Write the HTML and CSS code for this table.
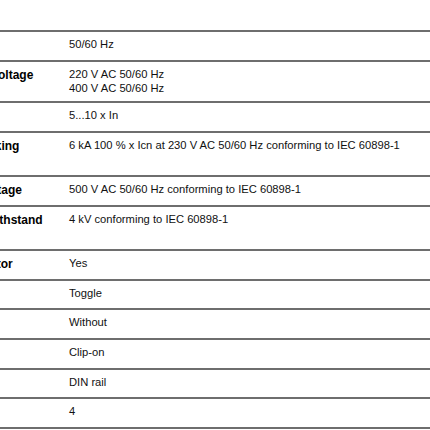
FILE: index.html
```html
<!DOCTYPE html>
<html lang="en">
<head>
<meta charset="utf-8">
<title>Technical characteristics</title>
<link rel="stylesheet" href="styles.css">
</head>
<body>
<div class="sheet">
  <table class="spec">
    <tbody>
      <tr><th>Network frequency</th><td>50/60 Hz</td></tr>
      <tr><th>[Ue] rated operational voltage</th><td>220 V AC 50/60 Hz<br>400 V AC 50/60 Hz</td></tr>
      <tr><th>Magnetic tripping limit</th><td>5...10 x In</td></tr>
      <tr><th>[Ics] rated service breaking capacity</th><td>6 kA 100 % x Icn at 230 V AC 50/60 Hz conforming to IEC 60898-1</td></tr>
      <tr><th>[Ui] rated insulation voltage</th><td>500 V AC 50/60 Hz conforming to IEC 60898-1</td></tr>
      <tr><th>[Uimp] rated impulse withstand voltage</th><td>4 kV conforming to IEC 60898-1</td></tr>
      <tr><th>Contact position indicator</th><td>Yes</td></tr>
      <tr><th>Control type</th><td>Toggle</td></tr>
      <tr><th>Local signalling</th><td>Without</td></tr>
      <tr><th>Mounting mode</th><td>Clip-on</td></tr>
      <tr><th>Mounting support</th><td>DIN rail</td></tr>
      <tr><th>9 mm pitches</th><td>4</td></tr>
    </tbody>
  </table>
</div>
</body>
</html>
```
FILE: styles.css
```css
html, body {
  margin: 0;
  padding: 0;
  background: #ffffff;
  overflow: hidden;
}

.sheet {
  width: 430px;
  height: 430px;
  overflow: hidden;
  padding-top: 30px;
  box-sizing: border-box;
}

.spec {
  border-collapse: collapse;
  margin-left: -140px;
  width: 574px;
  table-layout: fixed;
  font-family: "Liberation Sans", Arial, sans-serif;
  color: #111111;
}

.spec th,
.spec td {
  border-top: 2px solid #6e6e6e;
  border-bottom: 2px solid #6e6e6e;
  vertical-align: top;
  text-align: left;
}

.spec th {
  width: 197px;
  padding: 6px 4px 6.7px 4px;
  font-size: 12px;
  font-weight: bold;
  line-height: 14.9px;
  color: #000000;
}

.spec td {
  padding: 5px 4px 6.4px 4px;
  font-size: 11.2px;
  font-weight: normal;
  line-height: 14px;
}
```
